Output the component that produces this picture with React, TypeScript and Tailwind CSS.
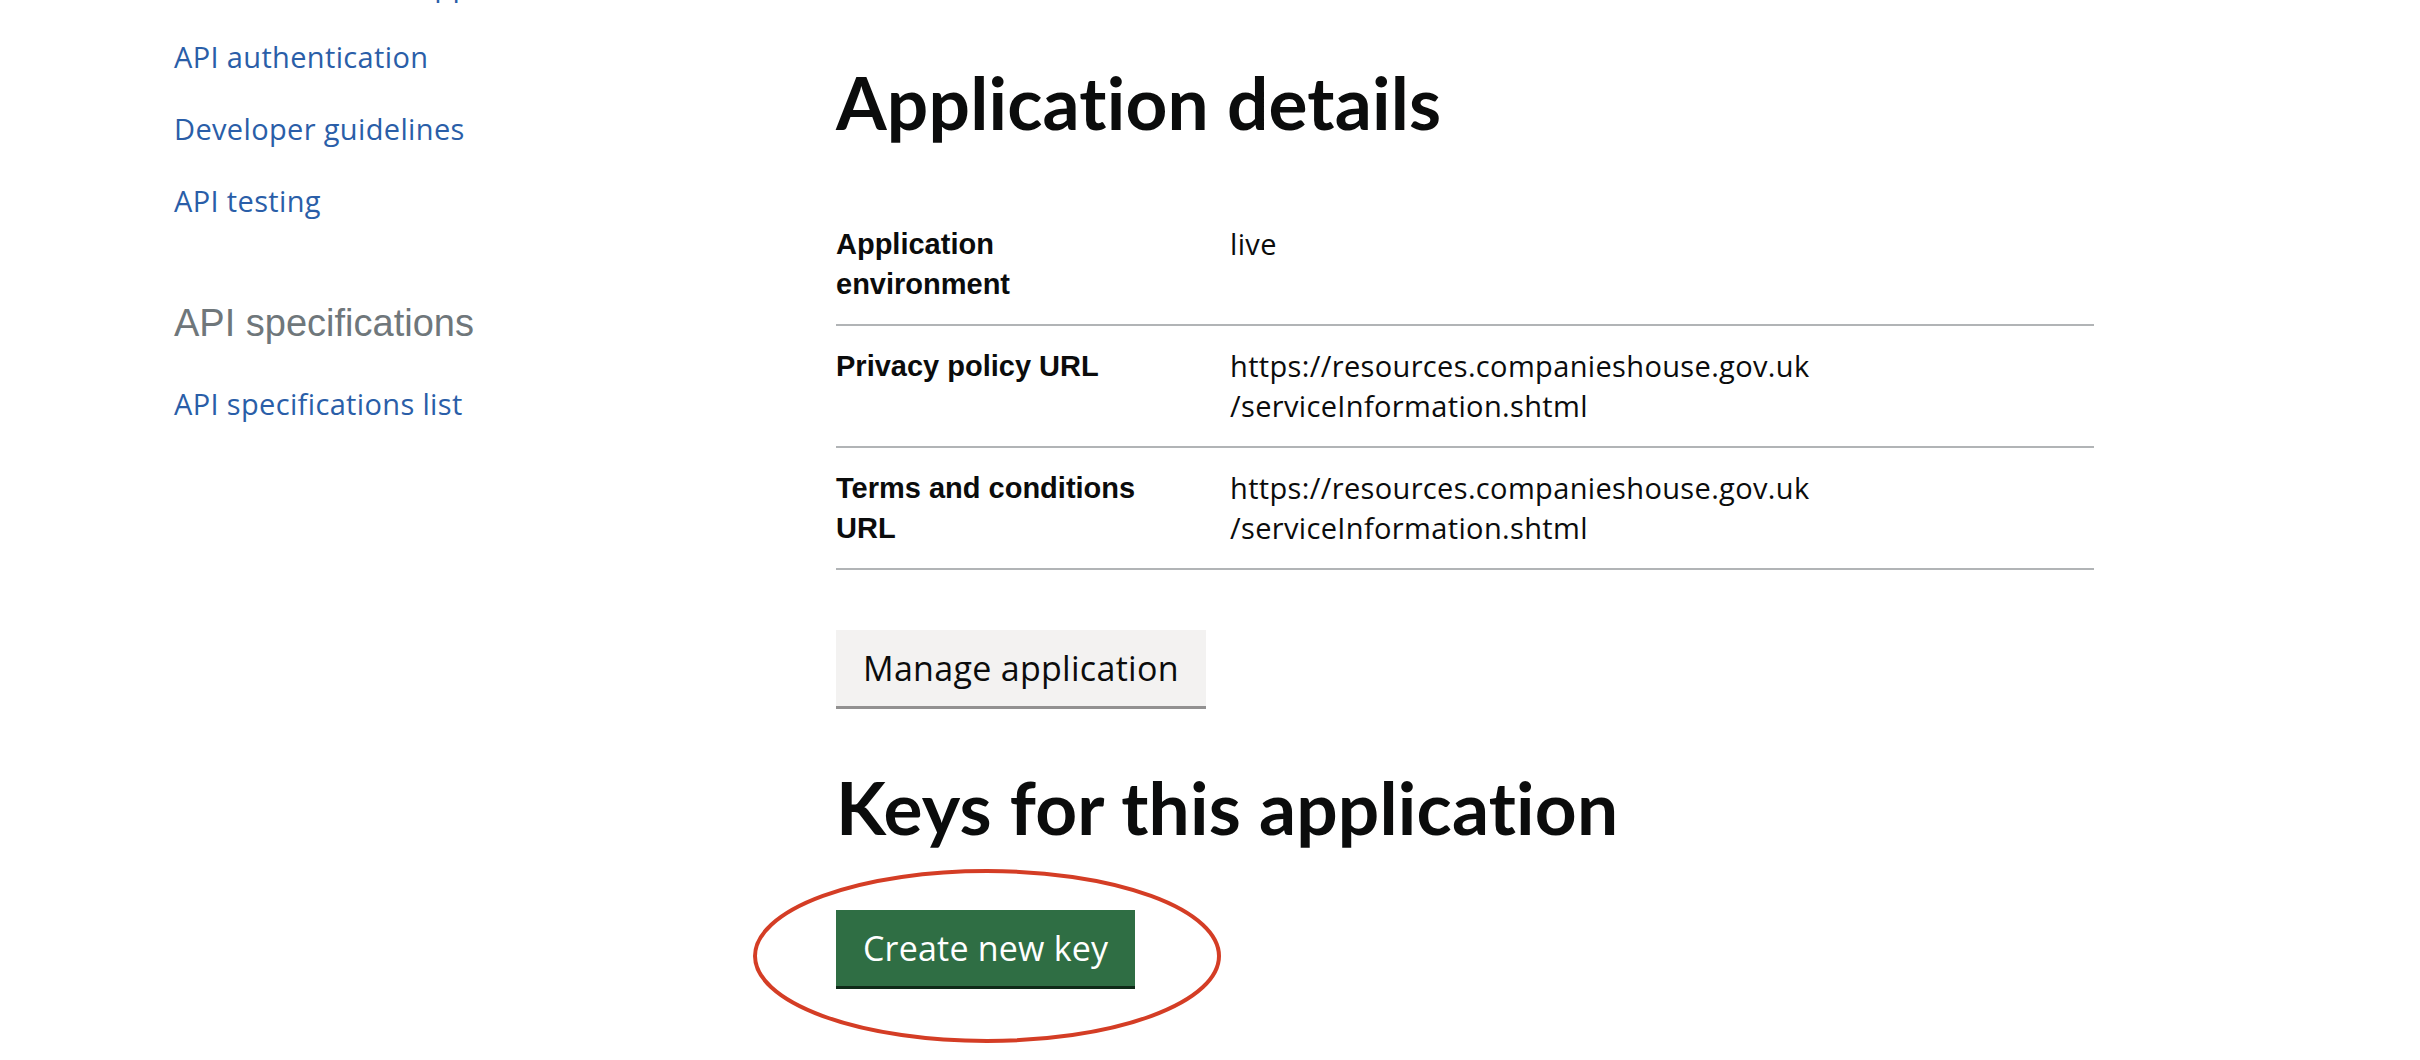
const sideLinks = ["How to create an application", "API authentication", "Developer guidelines", "API testing"]

const details = [
  { key: "Application environment", value: ["live"] },
  {
    key: "Privacy policy URL",
    value: ["https://resources.companieshouse.gov.uk", "/serviceInformation.shtml"],
  },
  {
    key: "Terms and conditions URL",
    value: ["https://resources.companieshouse.gov.uk", "/serviceInformation.shtml"],
  },
]

const body = "font-['Open_Sans',sans-serif] text-[29px] tracking-[0.35px]"
const heading =
  "font-['Lato',sans-serif] font-bold text-[73px] leading-[80px] text-[#0b0c0c] tracking-[0.2px]"

function Sidebar() {
  return (
    <nav className="w-[836px] shrink-0 pl-[174px]">
      <ul className="-mt-[51px]">
        {sideLinks.map((l) => (
          <li key={l} className="h-[72px]">
            <a href="#" className={`${body} block leading-[72px] text-[#2a5ea8]`}>
              {l}
            </a>
          </li>
        ))}
      </ul>
      <h3 className="mt-[61px] font-['Liberation_Sans',Arial,sans-serif] text-[38px] leading-[50px] text-[#6f777b]">
        API specifications
      </h3>
      <a href="#" className={`${body} mt-[20px] block h-[72px] leading-[72px] text-[#2a5ea8]`}>
        API specifications list
      </a>
    </nav>
  )
}

export default function App() {
  return (
    <div className="relative flex h-[1060px] w-[2420px] overflow-hidden bg-white text-[#0b0c0c]">
      <Sidebar />
      <main className="w-[1258px] pt-[62px]">
        <h1 className={heading}>Application details</h1>

        <dl className="mt-[62px]">
          {details.map((row) => (
            <div
              key={row.key}
              className="grid grid-cols-[394px_1fr] border-b-2 border-[#b1b4b6] pt-[20px] pb-[20px]"
            >
              <dt className="pr-[80px] font-['Liberation_Sans',Arial,sans-serif] text-[29px] font-bold leading-[40px]">
                {row.key}
              </dt>
              <dd className={`${body} leading-[40px]`}>
                {row.value.map((v) => (
                  <span key={v} className="block">
                    {v}
                  </span>
                ))}
              </dd>
            </div>
          ))}
        </dl>

        <button className="mt-[60px] flex h-[76px] items-center bg-[#f3f2f1] px-[27px] font-['Open_Sans',sans-serif] text-[34px] tracking-[0.3px] text-[#0b0c0c] shadow-[0_3px_0_#929191]">
          Manage application
        </button>

        <h2 className={`${heading} mt-[61px]`}>Keys for this application</h2>

        <div className="relative mt-[63px] inline-block">
          <button className="flex h-[76px] items-center bg-[#2f6e44] px-[27px] font-['Open_Sans',sans-serif] text-[34px] tracking-[0.2px] text-white shadow-[0_3px_0_#0f2a18]">
            Create new key
          </button>
          <svg
            className="pointer-events-none absolute -left-[83px] -top-[41px]"
            width="468"
            height="174"
            viewBox="0 0 468 174"
            fill="none"
          >
            <ellipse cx="234" cy="87" rx="232" ry="85" stroke="#d43d25" strokeWidth="4" />
          </svg>
        </div>
      </main>
    </div>
  )
}
